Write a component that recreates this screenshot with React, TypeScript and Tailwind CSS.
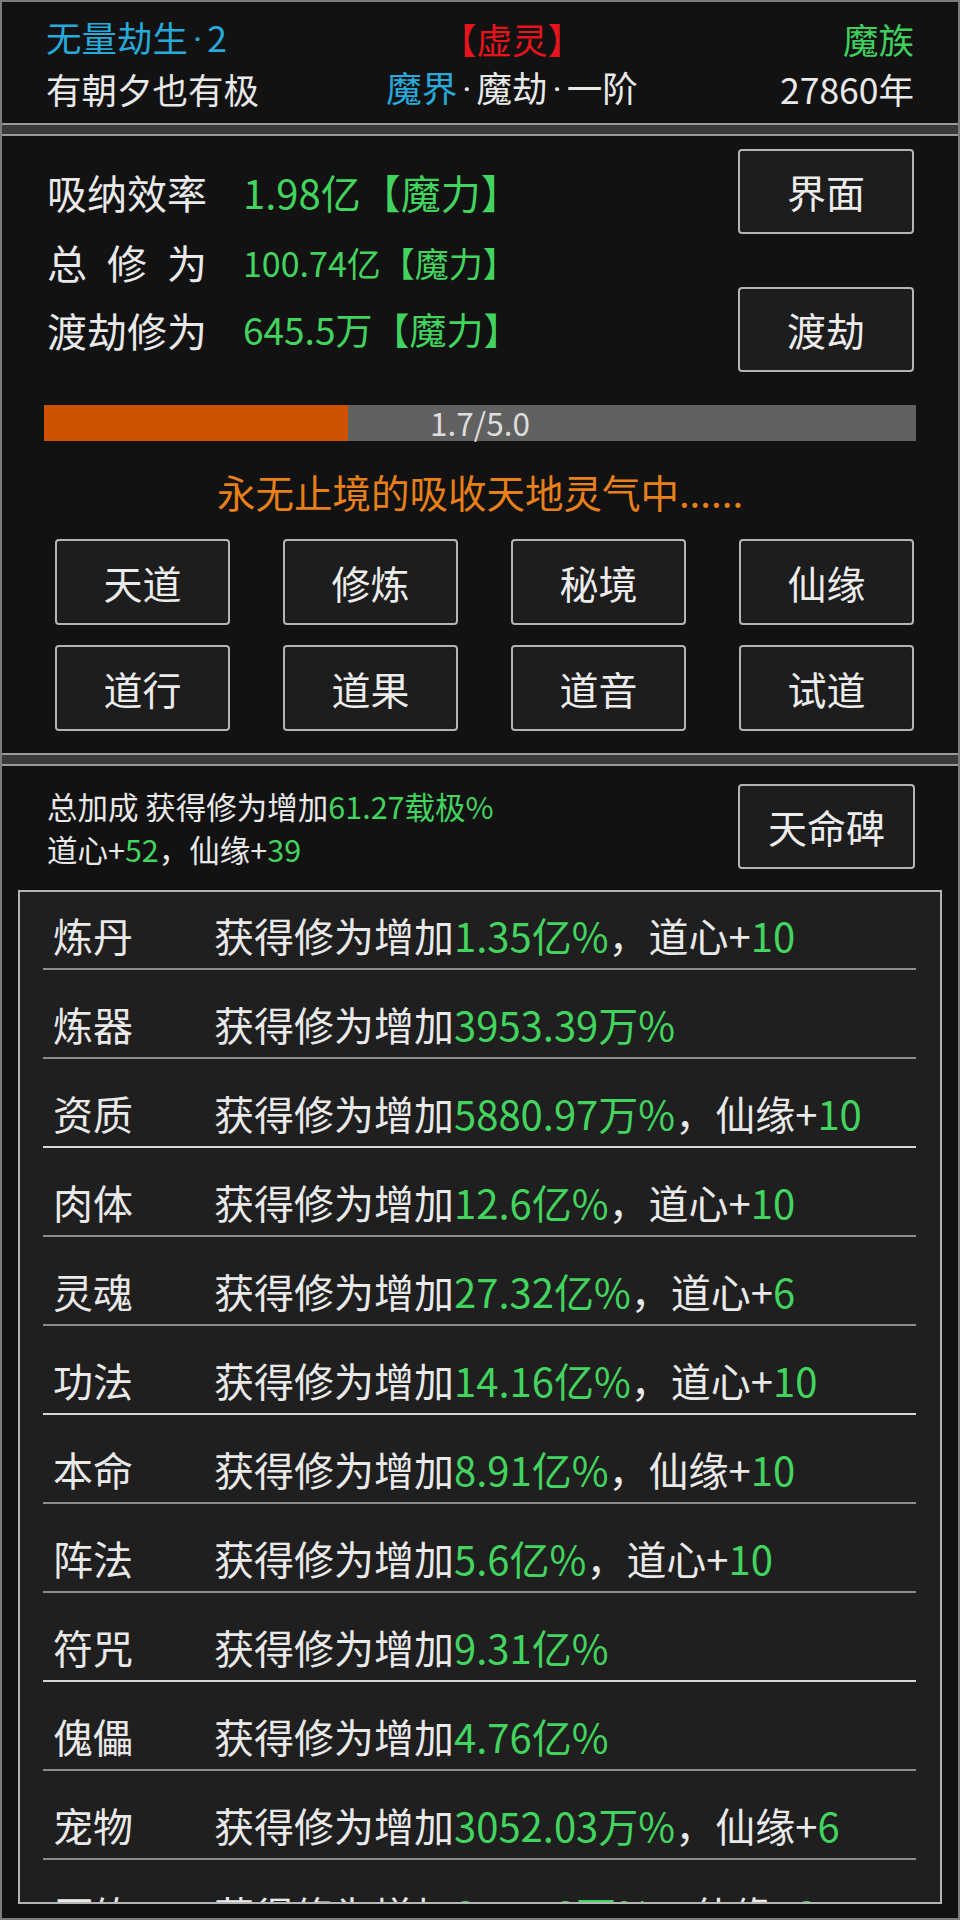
import React from "react";

const FONT = "font-[family-name:'Noto_Sans_CJK_SC','Noto_Sans',sans-serif]";

function Dot() {
  return <span className="mx-[5px] font-[family-name:'Roboto',sans-serif]">·</span>;
}

function Separator() {
  return <div className="h-[13px] shrink-0 border-y-2 border-y-[#9a9a9a] bg-[#3a3a3a]" />;
}

function Btn({ label, className = "" }: { label: string; className?: string }) {
  return (
    <div
      className={
        "flex items-center justify-center rounded-[4px] border-2 border-[#b4b4b4] bg-[#1d1d1d] text-[39px] leading-none text-[#ececec] " +
        className
      }
    >
      {label}
    </div>
  );
}

type Row = { name: string; val: string; extra?: [string, string] };

const rows: Row[] = [
  { name: "炼丹", val: "1.35亿%", extra: ["道心+", "10"] },
  { name: "炼器", val: "3953.39万%" },
  { name: "资质", val: "5880.97万%", extra: ["仙缘+", "10"] },
  { name: "肉体", val: "12.6亿%", extra: ["道心+", "10"] },
  { name: "灵魂", val: "27.32亿%", extra: ["道心+", "6"] },
  { name: "功法", val: "14.16亿%", extra: ["道心+", "10"] },
  { name: "本命", val: "8.91亿%", extra: ["仙缘+", "10"] },
  { name: "阵法", val: "5.6亿%", extra: ["道心+", "10"] },
  { name: "符咒", val: "9.31亿%" },
  { name: "傀儡", val: "4.76亿%" },
  { name: "宠物", val: "3052.03万%", extra: ["仙缘+", "6"] },
  { name: "历练", val: "844.78万%", extra: ["仙缘+", "8"] },
];

const grid = ["天道", "修炼", "秘境", "仙缘", "道行", "道果", "道音", "试道"];

export default function App() {
  return (
    <div
      className={
        FONT +
        " flex h-[1920px] w-[960px] flex-col overflow-hidden border-2 border-[#7c7c7c] bg-[#121212] text-[#e9e9e9]"
      }
    >
      {/* Header */}
      <div className="flex h-[121px] shrink-0 flex-col px-[44px] pt-[12px] text-[35.5px]">
        <div className="flex h-[50px] items-center">
          <div className="w-[240px] whitespace-nowrap text-[#27a9d9]">
            无量劫生<Dot />2
          </div>
          <div className="flex-1 text-center text-[#e8141c]">【虚灵】</div>
          <div className="w-[176px] text-right text-[#3fcf5c]">魔族</div>
        </div>
        <div className="flex h-[50px] items-center">
          <div className="w-[240px] whitespace-nowrap">有朝夕也有极</div>
          <div className="flex-1 whitespace-nowrap text-center">
            <span className="text-[#27a9d9]">魔界</span>
            <Dot />魔劫<Dot />一阶
          </div>
          <div className="w-[176px] text-right">27860年</div>
        </div>
      </div>

      <Separator />

      {/* Panel 2 */}
      <div className="flex h-[617px] shrink-0 flex-col pt-[13px]">
        <div className="flex h-[223px] justify-between pl-[45px] pr-[44px]">
          <div className="flex flex-col pt-[8px] text-[40px]">
            <div className="flex h-[70px] items-center">
              <div className="w-[160px] whitespace-nowrap">吸纳效率</div>
              <div className="ml-[36px] whitespace-nowrap text-[40px] text-[#42d45e]">1.98亿【魔力】</div>
            </div>
            <div className="flex h-[70px] items-center">
              <div className="flex w-[160px] justify-between">
                <span>总</span>
                <span>修</span>
                <span>为</span>
              </div>
              <div className="ml-[36px] whitespace-nowrap text-[34px] text-[#42d45e]">100.74亿【魔力】</div>
            </div>
            <div className="flex h-[66px] items-center">
              <div className="w-[160px] whitespace-nowrap">渡劫修为</div>
              <div className="ml-[36px] whitespace-nowrap text-[37px] text-[#42d45e]">645.5万【魔力】</div>
            </div>
          </div>
          <div className="flex flex-col gap-[53px]">
            <Btn label="界面" className="h-[85px] w-[176px]" />
            <Btn label="渡劫" className="h-[85px] w-[176px]" />
          </div>
        </div>

        <div className="relative mx-[42px] mt-[33px] h-[36px] bg-[#616161]">
          <div className="h-full w-[304px] bg-[#cc5200]" />
          <div className="absolute inset-0 flex items-center justify-center text-[31.5px] leading-none text-[#dedede]">
            1.7/5.0
          </div>
        </div>

        <div className="mt-[30px] h-[40px] whitespace-nowrap text-center text-[38.5px] leading-[40px] text-[#e8801a]">
          永无止境的吸收天地灵气中......
        </div>

        <div className="mt-[28px] grid grid-cols-4 gap-x-[53px] gap-y-[20px] pl-[53px] pr-[44px]">
          {grid.map((g) => (
            <Btn key={g} label={g} className="h-[86px]" />
          ))}
        </div>
      </div>

      <Separator />

      {/* Panel 3 */}
      <div className="flex min-h-0 flex-1 flex-col pt-[18px]">
        <div className="flex h-[85px] shrink-0 justify-between pl-[45px] pr-[43px]">
          <div className="mt-[1px] whitespace-nowrap text-[30.5px] leading-[43px]">
            <div>
              总加成 获得修为增加<span className="text-[#42d45e]">61.27载极%</span>
            </div>
            <div>
              道心+<span className="text-[#42d45e]">52</span>，仙缘+<span className="text-[#42d45e]">39</span>
            </div>
          </div>
          <Btn label="天命碑" className="h-[85px] w-[177px]" />
        </div>

        <div className="mx-[16px] mt-[21px] h-[1014px] shrink-0 overflow-hidden border-2 border-[#b4b4b4] bg-[#1f1f1f]">
          <div className="-mt-[11px] ml-[23px] mr-[24px]">
            {rows.map((r, i) => (
              <div
                key={r.name}
                className={
                  "flex h-[89px] items-end border-b-2 pb-[13px] text-[40px] leading-[40px] " +
                  ((i + 1) % 3 === 0 ? "border-b-[#d6d6d6]" : "border-b-[#8c8c8c]")
                }
              >
                <div className="w-[171px] shrink-0 pl-[10px]">{r.name}</div>
                <div className="whitespace-nowrap">
                  获得修为增加<span className="text-[#42d45e]">{r.val}</span>
                  {r.extra && (
                    <>
                      ，{r.extra[0]}
                      <span className="text-[#42d45e]">{r.extra[1]}</span>
                    </>
                  )}
                </div>
              </div>
            ))}
          </div>
        </div>
      </div>
    </div>
  );
}
